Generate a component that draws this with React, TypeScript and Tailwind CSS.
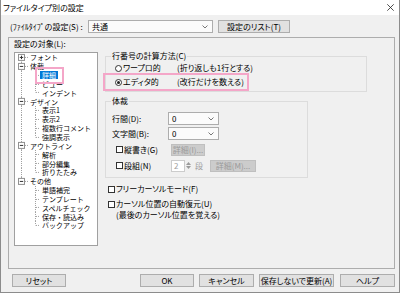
import React from "react";

// ── Tree data
type TreeItem = {
  label: string;
  level: 0 | 1;
  expander?: "plus" | "minus";
  lastRoot?: boolean;
  firstRoot?: boolean;
  lastChild?: boolean;
  rootLine?: boolean; // root connector continues through a child row
  selected?: boolean;
};

const tree: TreeItem[] = [
  { label: "フォント", level: 0, expander: "plus", firstRoot: true },
  { label: "体裁", level: 0, expander: "minus" },
  { label: "詳細", level: 1, rootLine: true, selected: true },
  { label: "ビュー", level: 1, rootLine: true },
  { label: "インデント", level: 1, rootLine: true, lastChild: true },
  { label: "デザイン", level: 0, expander: "minus" },
  { label: "表示1", level: 1, rootLine: true },
  { label: "表示2", level: 1, rootLine: true },
  { label: "複数行コメント", level: 1, rootLine: true },
  { label: "強調表示", level: 1, rootLine: true, lastChild: true },
  { label: "アウトライン", level: 0, expander: "minus" },
  { label: "解析", level: 1, rootLine: true },
  { label: "部分編集", level: 1, rootLine: true },
  { label: "折りたたみ", level: 1, rootLine: true, lastChild: true },
  { label: "その他", level: 0, expander: "minus", lastRoot: true },
  { label: "単語補完", level: 1 },
  { label: "テンプレート", level: 1 },
  { label: "スペルチェック", level: 1 },
  { label: "保存・読込み", level: 1 },
  { label: "バックアップ", level: 1, lastChild: true },
];

const H = 8.85;
const LINE = "#a0a0a0";

function Connector({ item }: { item: TreeItem }) {
  const mid = H / 2;
  if (item.level === 0) {
    const y1 = item.firstRoot ? mid : 0;
    const y2 = item.lastRoot ? mid : H;
    return (
      <svg width="14" height={H} viewBox={`0 0 14 ${H}`} className="shrink-0">
        <line x1="6.5" y1={y1} x2="6.5" y2={y2} stroke={LINE} strokeDasharray="1 1" />
        <line x1="10" y1={mid} x2="14" y2={mid} stroke={LINE} strokeDasharray="1 1" />
        <rect x="3.5" y={mid - 3} width="6" height="6" fill="#fff" stroke="#919191" />
        <line x1="4.8" y1={mid} x2="8.2" y2={mid} stroke="#333" />
        {item.expander === "plus" && (
          <line x1="6.5" y1={mid - 1.7} x2="6.5" y2={mid + 1.7} stroke="#333" />
        )}
      </svg>
    );
  }
  return (
    <svg width="25" height={H} viewBox={`0 0 25 ${H}`} className="shrink-0">
      {item.rootLine && (
        <line x1="6.5" y1="0" x2="6.5" y2={H} stroke={LINE} strokeDasharray="1 1" />
      )}
      <line x1="20.5" y1="0" x2="20.5" y2={item.lastChild ? mid : H} stroke={LINE} strokeDasharray="1 1" />
      <line x1="21" y1={mid} x2="25" y2={mid} stroke={LINE} strokeDasharray="1 1" />
    </svg>
  );
}

function Chevron() {
  return (
    <svg width="6" height="4" viewBox="0 0 6 4" className="shrink-0">
      <polyline points="0.5,0.5 3,3 5.5,0.5" fill="none" stroke="#555" strokeWidth="0.8" />
    </svg>
  );
}

function Btn({ children, className = "" }: { children: React.ReactNode; className?: string }) {
  return (
    <div
      className={`h-[13px] flex items-center justify-center bg-[#e1e1e1] border border-[#adadad] whitespace-nowrap ${className}`}
    >
      {children}
    </div>
  );
}

function Combo({ value, className = "" }: { value: string; className?: string }) {
  return (
    <div
      className={`h-[13px] flex items-center justify-between bg-[#fbfbfb] border border-[#adadad] pl-[3px] pr-[4px] ${className}`}
    >
      <span>{value}</span>
      <Chevron />
    </div>
  );
}

function Radio({ checked }: { checked?: boolean }) {
  return (
    <span className="w-[7px] h-[7px] shrink-0 rounded-full border border-[#333] bg-white flex items-center justify-center">
      {checked && <span className="w-[3px] h-[3px] rounded-full bg-[#222]" />}
    </span>
  );
}

function Check() {
  return <span className="w-[7px] h-[7px] shrink-0 border border-[#333] bg-white" />;
}

export default function App() {
  return (
    <div className="w-[400px] h-[293px] overflow-hidden bg-[#f0f0f0] border-x border-b border-[#8c8c8c] flex flex-col text-[8px] leading-[10px] text-black font-['Noto_Sans_CJK_JP',sans-serif] [font-feature-settings:'palt']">
      {/* Title bar */}
      <div className="h-[15px] shrink-0 bg-white flex items-center justify-between pl-[2px] pr-[5px]">
        <span>ファイルタイプ別の設定</span>
        <svg width="7" height="7" viewBox="0 0 7 7">
          <path d="M0.3 0.3 L6.7 6.7 M6.7 0.3 L0.3 6.7" stroke="#222" strokeWidth="0.8" />
        </svg>
      </div>

      {/* File type row */}
      <div className="mt-[5px] h-[13px] shrink-0 flex items-center pl-[9px]">
        <span className="w-[78px] whitespace-nowrap">(ﾌｧｲﾙﾀｲﾌﾟの設定(S) :</span>
        <Combo value="共通" className="w-[125px]" />
        <Btn className="ml-[5px] w-[72px]">設定のリスト(T)</Btn>
      </div>

      {/* Property page */}
      <div className="mt-[4px] ml-[7px] w-[387px] h-[232px] shrink-0 border border-[#adadad] flex">
        {/* Left: target tree */}
        <div className="pl-[5px] flex flex-col">
          <div className="h-[12px] flex items-center">設定の対象(L):</div>
          <div className="relative mt-[2px] w-[84px] h-[194px] bg-white border border-[#a0a0a0] overflow-hidden text-[7px] [font-feature-settings:normal]">
            {tree.map((item) => (
              <div key={item.label} className="flex items-center whitespace-nowrap" style={{ height: H }}>
                <Connector item={item} />
                <span
                  className={
                    item.level === 0
                      ? "px-[1px] leading-[8px]"
                      : item.selected
                        ? "px-[2px] leading-[8px] bg-[#0078d7] text-white"
                        : "px-[2px] leading-[8px]"
                  }
                >
                  {item.label}
                </span>
              </div>
            ))}
            {/* annotation */}
            <div className="absolute left-[20px] top-[14px] w-[29px] h-[17px] border-2 border-[#f4a6c8]" />
          </div>
        </div>

        {/* Right: settings */}
        <div className="relative ml-[7px] pt-[13px] flex flex-col">
          <fieldset className="w-[262px] border border-[#dcdcdc] pb-[2px]">
            <legend className="ml-[5px] px-[1px] leading-[10px]">行番号の計算方法(C)</legend>
            <div className="h-[14px] flex items-center pl-[9px]">
              <Radio />
              <span className="ml-[1px] w-[54px]">ワープロ的</span>
              <span>(折り返しも1行とする)</span>
            </div>
            <div className="h-[14px] flex items-center pl-[9px]">
              <Radio checked />
              <span className="ml-[1px] w-[54px]">エディタ的</span>
              <span>(改行だけを数える)</span>
            </div>
          </fieldset>

          <fieldset className="mt-[4px] w-[203px] border border-[#dcdcdc] pt-[6px] pb-[5px]">
            <legend className="ml-[5px] px-[1px] leading-[10px]">体裁</legend>
            <div className="h-[13px] flex items-center pl-[6px]">
              <span className="w-[56px]">行間(D):</span>
              <Combo value="0" className="w-[51px]" />
            </div>
            <div className="mt-[2px] h-[13px] flex items-center pl-[6px]">
              <span className="w-[56px]">文字間(B):</span>
              <Combo value="0" className="w-[51px]" />
            </div>
            <div className="mt-[3px] h-[13px] flex items-center pl-[10px]">
              <Check />
              <span className="ml-[1px] w-[47px]">縦書き(G)</span>
              <div className="w-[34px] h-[12px] flex items-center justify-center bg-[#cccccc] border border-[#bfbfbf] text-[#9a9a9a]">
                詳細(I)...
              </div>
            </div>
            <div className="mt-[3px] h-[13px] flex items-center pl-[10px]">
              <Check />
              <span className="ml-[1px] w-[47px]">段組(N)</span>
              <div className="w-[14px] h-[12px] flex items-center pl-[2px] bg-white border border-[#cccccc] text-[#a0a0a0]">
                2
              </div>
              <div className="w-[6px] h-[12px] flex flex-col items-center justify-center gap-[1px]">
                <svg width="5" height="3" viewBox="0 0 5 3">
                  <polygon points="2.5,0 5,3 0,3" fill="#9a9a9a" />
                </svg>
                <svg width="5" height="3" viewBox="0 0 5 3">
                  <polygon points="0,0 5,0 2.5,3" fill="#9a9a9a" />
                </svg>
              </div>
              <span className="ml-[4px] text-[#a0a0a0]">段</span>
              <div className="ml-[7px] w-[46px] h-[12px] flex items-center justify-center bg-[#cccccc] border border-[#bfbfbf] text-[#9a9a9a]">
                詳細(M)...
              </div>
            </div>
          </fieldset>

          <div className="mt-[5px] h-[12px] flex items-center pl-[3px]">
            <Check />
            <span className="ml-[1px]">フリーカーソルモード(F)</span>
          </div>
          <div className="mt-[3px] h-[12px] flex items-center pl-[3px]">
            <Check />
            <span className="ml-[1px]">カーソル位置の自動復元(U)</span>
          </div>
          <div className="h-[10px] flex items-center pl-[11px]">(最後のカーソル位置を覚える)</div>

          {/* annotation */}
          <div className="absolute left-[-2px] top-[35px] w-[146px] h-[18px] border-2 border-[#f4a6c8]" />
        </div>
      </div>

      {/* Buttons */}
      <div className="mt-[5px] flex items-center pl-[11px]">
        <Btn className="w-[54px]">リセット</Btn>
        <Btn className="ml-[74px] w-[54px] border-[#0078d7]">OK</Btn>
        <Btn className="ml-[5px] w-[55px]">キャンセル</Btn>
        <Btn className="ml-[5px] w-[75px]">保存しないで更新(A)</Btn>
        <Btn className="ml-[6px] w-[55px]">ヘルプ</Btn>
      </div>
    </div>
  );
}
